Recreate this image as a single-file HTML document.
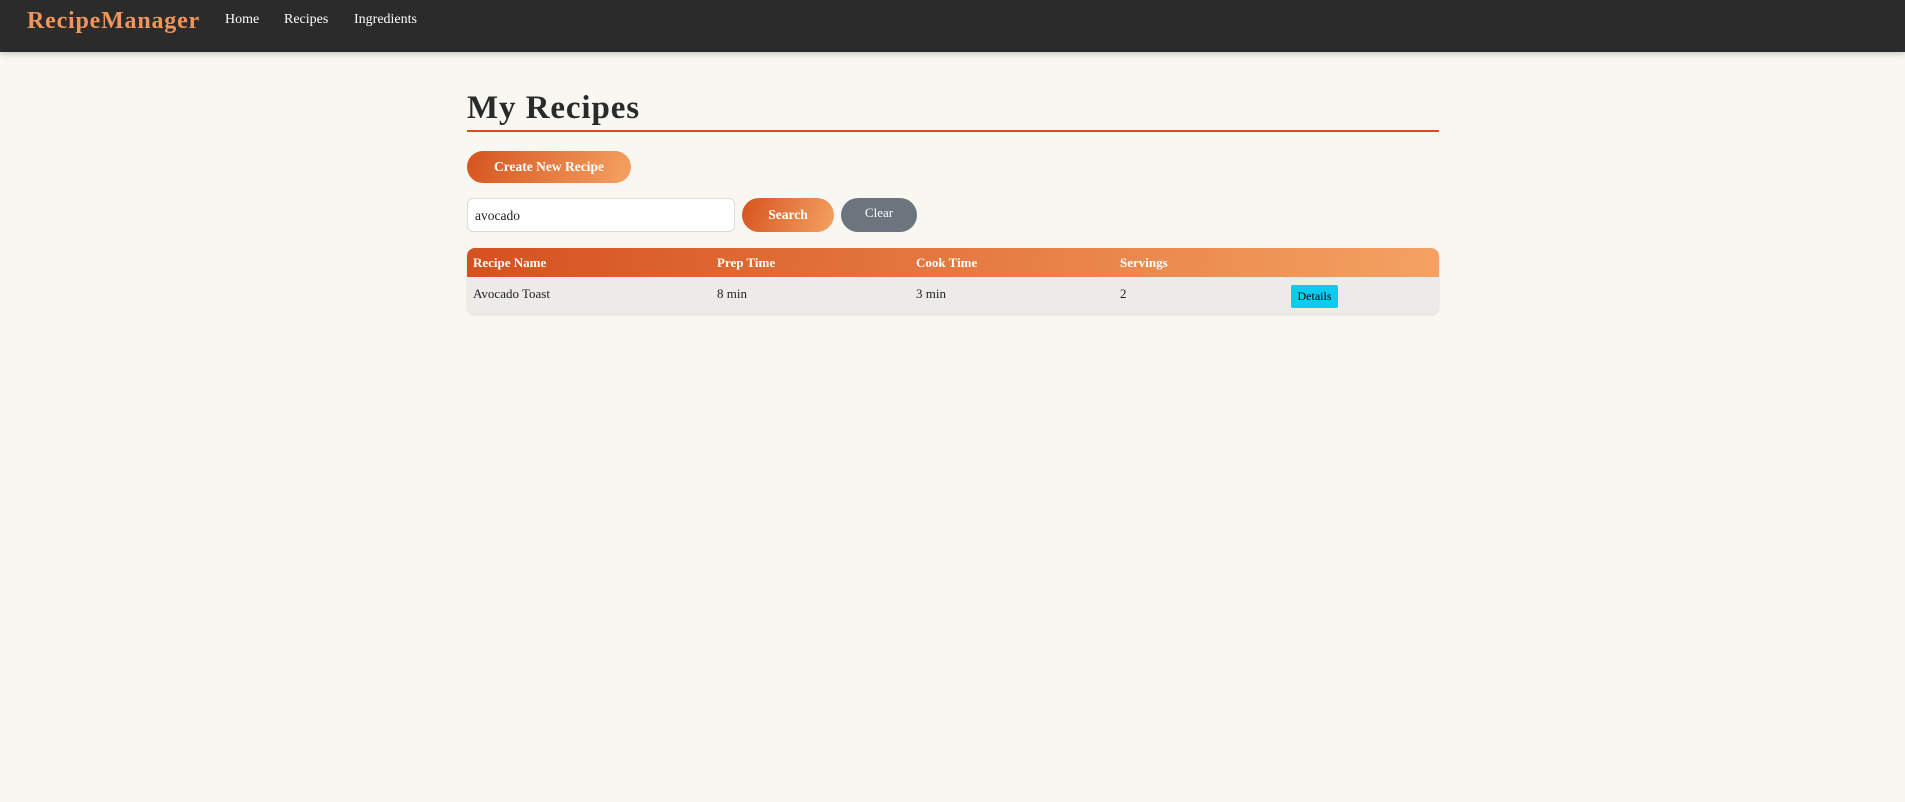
<!DOCTYPE html>
<html><head><meta charset="utf-8"><style>
*{box-sizing:border-box;margin:0;padding:0}
body{width:1905px;height:802px;background:#f8f7f2;font-family:"Liberation Serif",serif;color:#222;overflow:hidden;position:relative}
.nav{position:absolute;left:0;top:0;width:1905px;height:52px;background:#2b2b2b;box-shadow:0 2px 6px rgba(0,0,0,.2)}
.brand{position:absolute;left:27px;top:8px;font-size:24px;font-weight:bold;color:#f0965a;letter-spacing:.8px}
.nl{position:absolute;top:12px;font-size:14px;color:#fff}
h1{position:absolute;left:467px;top:88px;font-size:33px;font-weight:bold;color:#2a2a2a;letter-spacing:.9px;line-height:40px}
.rule{position:absolute;left:467px;top:130px;width:972px;height:2px;background:#d4501f}
.btn{position:absolute;border-radius:16px;color:#fff;font-weight:bold;font-size:13.5px;text-align:center;background:linear-gradient(110deg,#d6531f,#f4a262)}
.inp{position:absolute;left:467px;top:198px;width:268px;height:34px;background:#fff;border:1px solid #ddd;border-radius:6px;font-size:13.5px;padding:9px 0 0 7px}
.tbl{position:absolute;left:467px;top:248px;width:972px;height:66px;border-radius:8px;overflow:hidden;background:#ecebe7;box-shadow:0 1px 2px rgba(0,0,0,.12)}
.hd{position:absolute;left:0;top:0;width:972px;height:29px;background:linear-gradient(100deg,#d5511f,#f4a263)}
.c{position:absolute;font-size:13px}
.hd .c{color:#fff;font-weight:bold;top:7px}
.det{position:absolute;left:824px;top:37px;width:47px;height:23px;background:#0dcaf0;border-radius:2px;font-size:12px;text-align:center;line-height:23px;color:#000}
</style></head><body>
<div class="nav"><div class="brand">RecipeManager</div>
<div class="nl" style="left:225px">Home</div><div class="nl" style="left:284px">Recipes</div><div class="nl" style="left:354px">Ingredients</div></div>
<h1>My Recipes</h1><div class="rule"></div>
<div class="btn" style="left:467px;top:151px;width:164px;height:32px;line-height:32px">Create New Recipe</div>
<div class="inp">avocado</div>
<div class="btn" style="left:742px;top:198px;width:92px;height:34px;line-height:34px;border-radius:17px">Search</div>
<div class="btn" style="left:841px;top:198px;width:76px;height:34px;line-height:30px;border-radius:17px;background:#6c757d;font-weight:normal;font-size:13px">Clear</div>
<div class="tbl"><div class="hd">
<div class="c" style="left:6px">Recipe Name</div><div class="c" style="left:250px">Prep Time</div><div class="c" style="left:449px">Cook Time</div><div class="c" style="left:653px">Servings</div></div>
<div class="c" style="left:6px;top:38px">Avocado Toast</div><div class="c" style="left:250px;top:38px">8 min</div><div class="c" style="left:449px;top:38px">3 min</div><div class="c" style="left:653px;top:38px">2</div>
<div class="det">Details</div></div>
</body></html>
